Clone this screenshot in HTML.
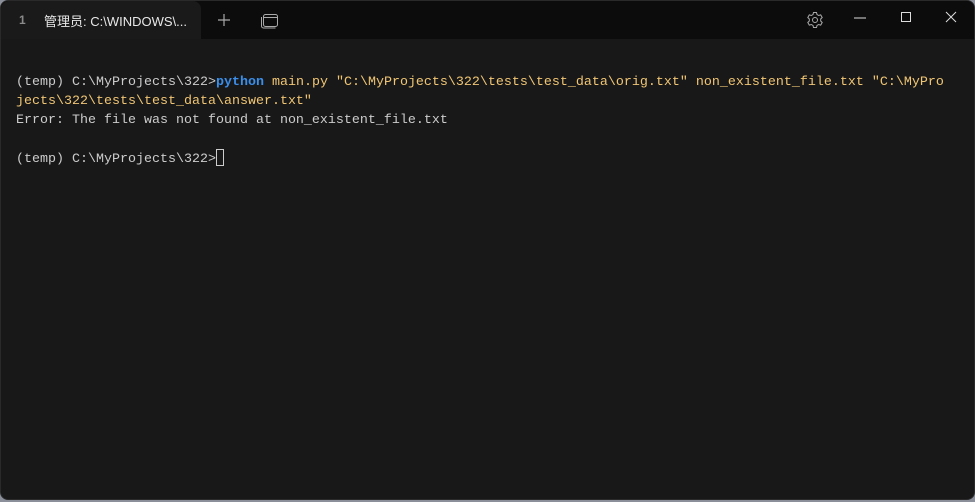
<!DOCTYPE html>
<html><head><meta charset="utf-8"><style>
*{margin:0;padding:0;box-sizing:border-box}
html,body{width:975px;height:502px;overflow:hidden;background:#8a8f99}
.win{position:absolute;left:0;top:0;width:975px;height:500px;background:#181818;border-radius:8px;overflow:hidden;border:1px solid #2a2a2a}
.bar{position:absolute;left:0;top:0;width:975px;height:38px;background:#0c0c0c}
.tab{position:absolute;left:0;top:0;width:200px;height:38px;background:#1a1a1a;border-radius:8px 8px 0 0}
.tab .n{position:absolute;left:18px;top:12px;color:#8a8a8a;font:bold 12px "Liberation Sans",sans-serif}
.tab .t{position:absolute;left:43px;top:10px;color:#e8e8e8;font:13px "Liberation Sans","Noto Sans CJK SC",sans-serif}
.term{position:absolute;left:15px;top:72px;font:13.33px/19px "Liberation Mono",monospace;color:#cccccc;white-space:pre}
.b{color:#3b8eea;font-weight:bold}.y{color:#f0c674}
.cur{display:inline-block;width:8px;height:17px;border:1px solid #ccc;vertical-align:-4px}
svg{position:absolute}
</style></head><body>
<div class="win">
<div class="bar"></div>
<div class="tab"><span class="n">1</span><span class="t">管理员: C:\WINDOWS\...</span></div>
<svg style="left:214px;top:10px" width="18" height="18"><path d="M9 3v12M3 9h12" stroke="#aaa" stroke-width="1.2"/></svg>
<svg style="left:259px;top:10px" width="20" height="18"><rect x="3.5" y="3.5" width="14" height="12" rx="2" fill="none" stroke="#aaa"/><path d="M1.5 6v9a2 2 0 0 0 2 2h12M3.5 6.5h14" fill="none" stroke="#aaa"/></svg>
<svg style="left:804px;top:9px" width="20" height="20"><circle cx="10" cy="10" r="2.5" fill="none" stroke="#aaa"/><path d="M8.5 2.5h3l.5 2 1.7 1 2-.6 1.5 2.6-1.5 1.5v2l1.5 1.5-1.5 2.6-2-.6-1.7 1-.5 2h-3l-.5-2-1.7-1-2 .6-1.5-2.6 1.5-1.5v-2L2.8 7.5l1.5-2.6 2 .6 1.7-1z" fill="none" stroke="#aaa"/></svg>
<svg style="left:850px;top:10px" width="20" height="16"><path d="M3 7h12" stroke="#ddd"/></svg>
<svg style="left:898px;top:8px" width="16" height="16"><rect x="2.5" y="3.5" width="9" height="9" fill="none" stroke="#ddd"/></svg>
<svg style="left:942px;top:8px" width="16" height="16"><path d="M3 3l10 10M13 3L3 13" stroke="#ddd"/></svg>
<div class="term">(temp) C:\MyProjects\322&gt;<span class="b">python</span> <span class="y">main.py "C:\MyProjects\322\tests\test_data\orig.txt" non_existent_file.txt "C:\MyPro</span>
<span class="y">jects\322\tests\test_data\answer.txt"</span>
Error: The file was not found at non_existent_file.txt

(temp) C:\MyProjects\322&gt;<span class="cur"></span></div>
</div>
</body></html>
